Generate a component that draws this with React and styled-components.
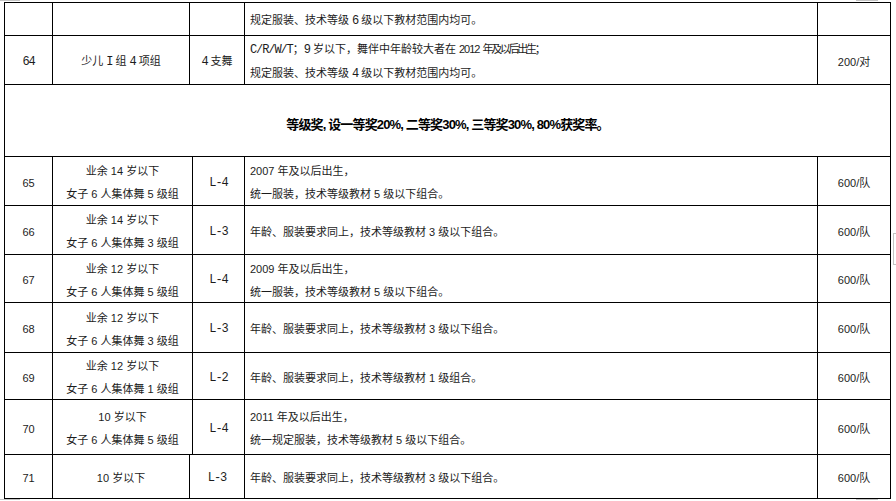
import React from "react";
import styled, { createGlobalStyle } from "styled-components";

const GlobalStyle = createGlobalStyle`
    html, body {
        margin: 0;
        padding: 0;
        background: #ffffff;
    }
    body {
        font-family: "Liberation Sans", "Noto Sans CJK SC", sans-serif;
        color: #1c1c1c;
    }
`;

const NARROW = "48px 137px 55px 573px 73px";
const WIDE = "48px 140px 52px 573px 73px";

const groupRows = [
    { no: "65", h: 49, name: ["业余 14 岁以下", "女子 6 人集体舞 5 级组"], level: "L-4", rule: ["2007 年及以后出生，", "统一服装，技术等级教材 5 级以下组合。"] },
    { no: "66", h: 49, name: ["业余 14 岁以下", "女子 6 人集体舞 3 级组"], level: "L-3", rule: ["年龄、服装要求同上，技术等级教材 3 级以下组合。"] },
    { no: "67", h: 48, name: ["业余 12 岁以下", "女子 6 人集体舞 5 级组"], level: "L-4", rule: ["2009 年及以后出生，", "统一服装，技术等级教材 5 级以下组合。"] },
    { no: "68", h: 50, name: ["业余 12 岁以下", "女子 6 人集体舞 3 级组"], level: "L-3", rule: ["年龄、服装要求同上，技术等级教材 3 级以下组合。"] },
    { no: "69", h: 47, name: ["业余 12 岁以下", "女子 6 人集体舞 1 级组"], level: "L-2", rule: ["年龄、服装要求同上，技术等级教材 1 级组合。"] },
    { no: "70", h: 55, name: ["10 岁以下", "女子 6 人集体舞 5 级组"], level: "L-4", rule: ["2011 年及以后出生，", "统一规定服装，技术等级教材 5 级以下组合。"] },
    { no: "71", h: 44, narrow: true, name: ["10 岁以下"], level: "L-3", rule: ["年龄、服装要求同上，技术等级教材 3 级以下组合。"] },
];

export default function App() {
    return (
        <>
            <GlobalStyle />
            <Page>
                <Table>
                    <Row $cols={NARROW} $h={33}>
                        <Cell />
                        <Cell />
                        <Cell />
                        <Cell $left>
                            <Line>规定服装、技术等级 <Mono>6</Mono> 级以下教材范围内均可。</Line>
                        </Cell>
                        <Cell />
                    </Row>

                    <Row $cols={NARROW} $h={49}>
                        <Cell><Mono>64</Mono></Cell>
                        <Cell><Line>少儿 <Mono>I</Mono> 组 <Mono>4</Mono> 项组</Line></Cell>
                        <Cell><Line><Mono>4</Mono> 支舞</Line></Cell>
                        <Cell $left>
                            <Line>
                                <Mono>C/R/W/T</Mono>；<Mono>9</Mono> 岁以下，舞伴中年龄较大者在 <Squeeze>2012</Squeeze> <Tight>年及以后出生；</Tight>
                            </Line>
                            <Line>规定服装、技术等级 <Mono>4</Mono> 级以下教材范围内均可。</Line>
                        </Cell>
                        <Cell>200/对</Cell>
                    </Row>

                    <Row $cols={NARROW} $h={72}>
                        <Banner>等级奖, 设一等奖20%, 二等奖30%, 三等奖30%, 80%获奖率。</Banner>
                    </Row>

                    {groupRows.map((r) => (
                        <Row key={r.no} $cols={r.narrow ? NARROW : WIDE} $h={r.h}>
                            <Cell>{r.no}</Cell>
                            <Cell>
                                {r.name.map((t) => <Line key={t}>{t}</Line>)}
                            </Cell>
                            <Cell><Mono>{r.level}</Mono></Cell>
                            <Cell $left>
                                {r.rule.map((t) => <Line key={t}>{t}</Line>)}
                            </Cell>
                            <Cell>600/队</Cell>
                        </Row>
                    ))}
                </Table>

                <Mark style={{ left: 0, top: 0, width: 20 }} />
                <Mark style={{ left: 856, top: 0, width: 22 }} />
                <Mark style={{ left: 0, top: 499, width: 20 }} />
                <Mark style={{ left: 856, top: 499, width: 22 }} />
                <SideMark />
            </Page>
        </>
    );
}

const Page = styled.div`
    position: relative;
    width: 896px;
    height: 501px;
    box-sizing: border-box;
    padding: 2px 0 0 4px;
    overflow: hidden;
`;

const Table = styled.div`
    width: 887px;
    box-sizing: border-box;
    border-left: 1px solid #000;
    border-top: 1px solid #000;
`;

const Row = styled.div`
    display: grid;
    grid-template-columns: ${(p) => p.$cols};
    height: ${(p) => p.$h}px;
`;

const Cell = styled.div`
    box-sizing: border-box;
    border-right: 1px solid #000;
    border-bottom: 1px solid #000;
    display: flex;
    flex-direction: column;
    justify-content: center;
    align-items: ${(p) => (p.$left ? "flex-start" : "center")};
    padding: 4px 0 0 ${(p) => (p.$left ? "5px" : "0")};
    font-size: 11px;
    line-height: 23px;
    white-space: nowrap;
    overflow: hidden;
`;

const Line = styled.span`
    display: block;
`;

const Mono = styled.span`
    font-family: "Liberation Mono", "Noto Sans CJK SC", monospace;
    font-size: 12px;
    letter-spacing: -1.1px;
`;

const Squeeze = styled.span`
    letter-spacing: -1px;
`;

const Tight = styled.span`
    letter-spacing: -2.3px;
`;

const Banner = styled.div`
    grid-column: 1 / -1;
    box-sizing: border-box;
    border-right: 1px solid #000;
    border-bottom: 1px solid #000;
    display: flex;
    align-items: center;
    justify-content: center;
    padding-top: 5px;
    font-size: 13px;
    font-weight: 700;
    letter-spacing: -0.85px;
    color: #000;
    white-space: nowrap;
`;

const Mark = styled.div`
    position: absolute;
    height: 1px;
    background: #c4c4c4;
`;

const SideMark = styled.div`
    position: absolute;
    left: 893px;
    top: 233px;
    width: 4px;
    height: 32px;
    box-sizing: border-box;
    border-left: 1px solid #c4c4c4;
    border-top: 1px solid #c4c4c4;
    border-bottom: 1px solid #c4c4c4;
`;
